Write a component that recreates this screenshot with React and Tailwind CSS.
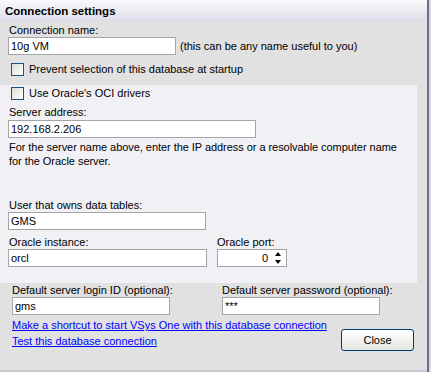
import React from "react";

function CheckBox() {
  return (
    <span className="inline-block w-[13px] h-[13px] border border-[#1c5180] bg-gradient-to-br from-[#dcdcd7] to-[#ffffff] shrink-0" />
  );
}

function TextInput({ value, className }) {
  return (
    <div className={"h-[18px] border border-[#a5a5a5] bg-white px-[2px] flex items-center leading-[13px] " + className}>
      {value}
    </div>
  );
}

export default function App() {
  return (
    <div
      className="w-[431px] h-[372px] flex bg-[#e1e1e1] text-black text-[11px] leading-[13px] overflow-hidden"
      style={{ fontFamily: '"Liberation Sans", Arial, sans-serif' }}
    >
      <div className="w-[427px] h-full flex flex-col border-b-2 border-[#c8c8d0]">
        {/* title bar */}
        <div
          className="h-[22px] shrink-0 bg-gradient-to-b from-[#fafafc] to-[#dcdce8] flex items-center pl-[5px] font-bold text-[11.5px]"
          style={{ fontFamily: '"Liberation Sans", Arial, sans-serif' }}
        >
          Connection settings
        </div>

        {/* top gray section */}
        <div className="h-[63px] shrink-0 flex flex-col pl-[8px] pt-[2px]">
          <div className="pl-[1px] h-[13px]">Connection name:</div>
          <div className="flex items-center">
            <TextInput value="10g VM" className="w-[168px]" />
            <span className="ml-[4px]">(this can be any name useful to you)</span>
          </div>
          <div className="flex items-center mt-[8px] pl-[3px]">
            <CheckBox />
            <span className="ml-[5px]">Prevent selection of this database at startup</span>
          </div>
        </div>

        {/* light panel */}
        <div className="w-[417px] h-[198px] shrink-0 bg-[#f1f1f5] flex flex-col pl-[8px]">
          <div className="flex items-center mt-[2px] pl-[3px]">
            <CheckBox />
            <span className="ml-[5px]">Use Oracle's OCI drivers</span>
          </div>
          <div className="pl-[1px] mt-[6px] h-[14px]">Server address:</div>
          <TextInput value="192.168.2.206" className="w-[248px]" />
          <div className="pl-[1px] mt-[2px] leading-[14px] w-[400px] tracking-[-0.05px]">
            For the server name above, enter the IP address or a resolvable computer name
            <br />
            for the Oracle server.
          </div>
          <div className="pl-[1px] mt-[31px] h-[13px]">User that owns data tables:</div>
          <TextInput value="GMS" className="w-[198px]" />
          <div className="flex mt-[6px]">
            <div className="flex flex-col w-[209px]">
              <div className="pl-[1px] h-[13px]">Oracle instance:</div>
              <TextInput value="orcl" className="w-[199px]" />
            </div>
            <div className="flex flex-col">
              <div className="h-[13px]">Oracle port:</div>
              <div className="w-[70px] h-[18px] border border-[#a5a5a5] bg-white flex items-center">
                <span className="flex-1 text-right pr-[3px]">0</span>
                <div className="w-[14px] h-full flex flex-col items-center justify-center gap-[1px] mr-[1px]">
                  <div className="w-[14px] h-[7px] flex items-center justify-center">
                    <div className="w-0 h-0 border-l-[3px] border-r-[3px] border-b-[4px] border-l-transparent border-r-transparent border-b-black" />
                  </div>
                  <div className="w-[14px] h-[7px] flex items-center justify-center">
                    <div className="w-0 h-0 border-l-[3px] border-r-[3px] border-t-[4px] border-l-transparent border-r-transparent border-t-black" />
                  </div>
                </div>
              </div>
            </div>
          </div>
        </div>

        {/* bottom section */}
        <div className="flex flex-col pl-[12px] pt-[1px]">
          <div className="flex">
            <div className="flex flex-col w-[210px]">
              <div className="h-[13px]">Default server login ID (optional):</div>
              <TextInput value="gms" className="w-[158px]" />
            </div>
            <div className="flex flex-col">
              <div className="h-[13px]">Default server password (optional):</div>
              <TextInput value="***" className="w-[158px]" />
            </div>
          </div>
          <div className="mt-[2px] leading-[16px] text-[#0000ff] underline">
            Make a shortcut to start VSys One with this database connection
          </div>
          <div className="flex items-start">
            <div className="leading-[16px] text-[#0000ff] underline">Test this database connection</div>
            <button className="ml-auto mr-[13px] mt-[-4px] w-[73px] h-[22px] rounded-[3px] border border-[#003c74] bg-gradient-to-b from-[#ffffff] to-[#e6e6e0] text-[11px] text-black">
              Close
            </button>
          </div>
        </div>
      </div>
      <div className="w-[2px] h-full bg-[#6e6e8c]" />
      <div className="w-[2px] h-full bg-[#d8d8e0]" />
    </div>
  );
}
